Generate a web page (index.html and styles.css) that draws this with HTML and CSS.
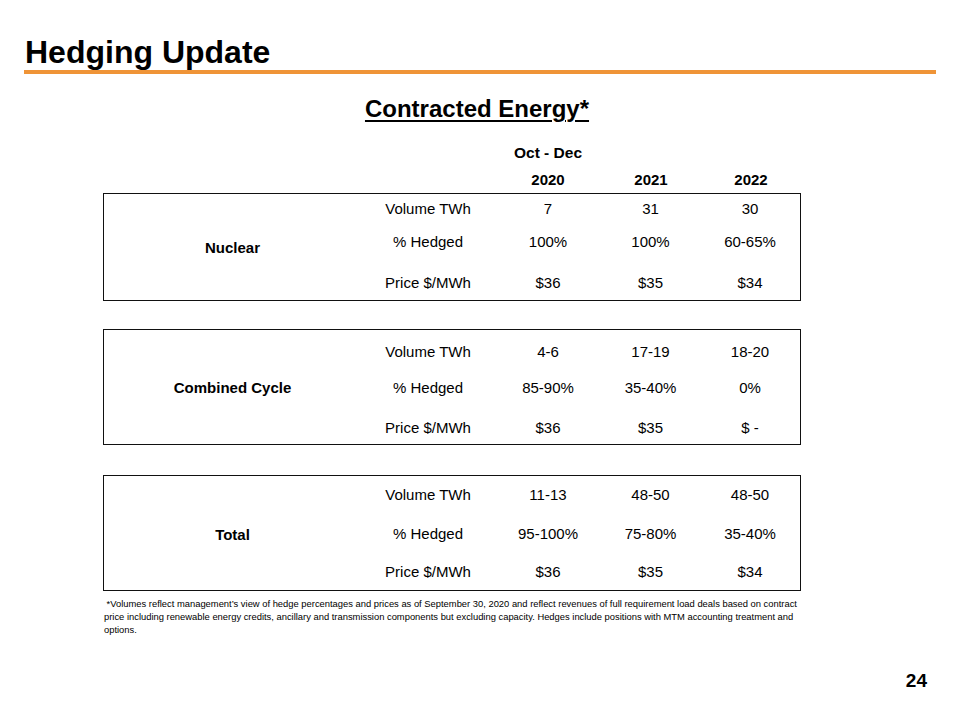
FILE: index.html
```html
<!DOCTYPE html>
<html lang="en">
<head>
<meta charset="utf-8">
<title>Hedging Update</title>
<link rel="stylesheet" href="styles.css">
</head>
<body>
<div class="slide">
  <header class="header">
    <h1 class="title">Hedging Update</h1>
  </header>
  <h2 class="subtitle">Contracted Energy*</h2>
  <div class="table">
    <div class="head-row period">
      <span class="c3">Oct - Dec</span>
    </div>
    <div class="head-row years">
      <span class="c3">2020</span>
      <span class="c4">2021</span>
      <span class="c5">2022</span>
    </div>
    <div class="box box-nuclear">
      <div class="cat">Nuclear</div>
      <div class="cell">Volume TWh</div><div class="cell">7</div><div class="cell">31</div><div class="cell">30</div>
      <div class="cell">% Hedged</div><div class="cell">100%</div><div class="cell">100%</div><div class="cell">60-65%</div>
      <div class="cell last">Price $/MWh</div><div class="cell last">$36</div><div class="cell last">$35</div><div class="cell last">$34</div>
    </div>
    <div class="box box-cc">
      <div class="cat">Combined Cycle</div>
      <div class="cell">Volume TWh</div><div class="cell">4-6</div><div class="cell">17-19</div><div class="cell">18-20</div>
      <div class="cell">% Hedged</div><div class="cell">85-90%</div><div class="cell">35-40%</div><div class="cell">0%</div>
      <div class="cell last">Price $/MWh</div><div class="cell last">$36</div><div class="cell last">$35</div><div class="cell last">$ -</div>
    </div>
    <div class="box box-total">
      <div class="cat">Total</div>
      <div class="cell">Volume TWh</div><div class="cell">11-13</div><div class="cell">48-50</div><div class="cell">48-50</div>
      <div class="cell">% Hedged</div><div class="cell">95-100%</div><div class="cell">75-80%</div><div class="cell">35-40%</div>
      <div class="cell last">Price $/MWh</div><div class="cell last">$36</div><div class="cell last">$35</div><div class="cell last">$34</div>
    </div>
  </div>
  <p class="note">&nbsp;*Volumes reflect management’s view of hedge percentages and prices as of September 30, 2020 and reflect revenues of full requirement load deals based on contract<br>price including renewable energy credits, ancillary and transmission components but excluding capacity. Hedges include positions with MTM accounting treatment and<br>options.</p>
  <div class="page-num">24</div>
</div>
</body>
</html>
```
FILE: styles.css
```css
* { box-sizing: border-box; }
html, body { margin: 0; padding: 0; background: #fff; }
body { font-family: "Liberation Sans", Arial, sans-serif; color: #000; }

.slide {
  width: 960px;
  height: 720px;
  display: flex;
  flex-direction: column;
  overflow: hidden;
}

.header {
  margin: 0 24px;
  padding-top: 35px;
  border-bottom: 4px solid #ef9437;
}
.title {
  margin: 0 0 0 1px;
  font-size: 32px;
  line-height: 35px;
  font-weight: bold;
}

.subtitle {
  margin: 21px 0 0 0;
  padding-right: 6px;
  text-align: center;
  font-size: 24px;
  line-height: 28px;
  font-weight: bold;
  text-decoration: underline;
  text-decoration-thickness: 2px;
  text-underline-offset: 3px;
}

.table {
  margin-left: 103px;
  width: 698px;
  font-size: 15px;
}

.head-row {
  display: grid;
  grid-template-columns: 258px 134px 106px 100px 100px;
  font-weight: bold;
  text-align: center;
  line-height: 20px;
}
.head-row .c3 { grid-column: 3; }
.head-row .c4 { grid-column: 4; }
.head-row .c5 { grid-column: 5; }
.period { margin-top: 20px; font-size: 15.5px; }
.years { margin-top: 7px; }

.box {
  display: grid;
  grid-template-columns: 257px 134px 106px 99px 100px;
  border: 1px solid #111;
  text-align: center;
}
.cat {
  grid-row: 1 / span 3;
  grid-column: 1;
  display: flex;
  align-items: center;
  justify-content: center;
  font-weight: bold;
}
.cell {
  display: flex;
  align-items: center;
  justify-content: center;
  line-height: 18px;
}

.box-nuclear { margin-top: 3px; grid-template-rows: 30px 36px 40px; }
.box-nuclear .last { padding-top: 5px; }
.box-cc { margin-top: 28px; grid-template-rows: 44px 28px 42px; }
.box-cc .last { padding-top: 10px; }
.box-total { margin-top: 30px; grid-template-rows: 38px 40px 36px; }
.box-total .cat { padding-top: 2px; }

.note {
  margin: 6px 0 0 104px;
  font-size: 9.4px;
  line-height: 13px;
  white-space: nowrap;
}

.page-num {
  margin-top: auto;
  padding: 0 33px 28px 0;
  text-align: right;
  font-size: 19px;
  line-height: 22px;
  font-weight: bold;
}
```
